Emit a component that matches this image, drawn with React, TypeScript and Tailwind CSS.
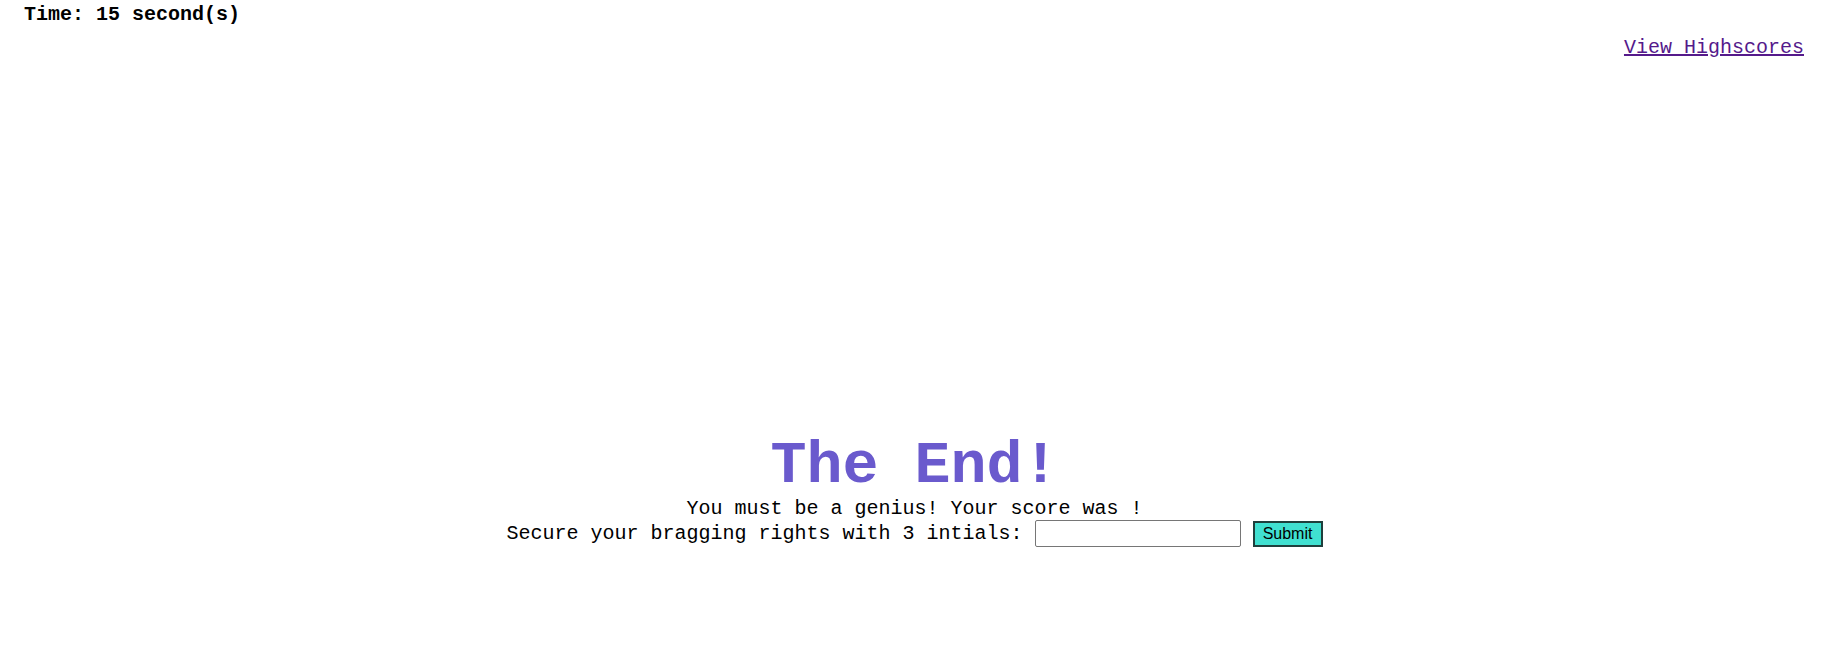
export default function App() {
  return (
    <div className="min-h-[667px] bg-white font-['Liberation_Mono','Courier_New',monospace] text-black">
      <header className="pl-[24px] pt-[3px] text-[20px] font-bold leading-[23px]">
        Time: 15 second(s)
      </header>
      <nav className="mt-[10px] flex justify-end pr-[31px] text-[20px] leading-[23px]">
        <a href="#" className="text-[#551A8B] underline">
          View Highscores
        </a>
      </nav>
      <main className="mt-[374px] flex flex-col items-center pr-[6px]">
        <h1 className="text-[60px] font-bold leading-[66px] text-[#6A5ACD]">
          The End!
        </h1>
        <p className="text-[20px] leading-[20px]">
          You must be a genius! Your score was !
        </p>
        <form className="mt-[1px] flex items-center text-[20px] leading-[23px]">
          <span className="whitespace-pre">Secure your bragging rights with 3 intials: </span>
          <input
            type="text"
            className="h-[27px] w-[206px] rounded-[2px] border border-[#767676] bg-white"
          />
          <button
            type="button"
            className="ml-[12px] h-[26px] w-[70px] border-2 border-[#1f3f3c] bg-[#40E0D0] font-['Liberation_Sans',Arial,sans-serif] text-[16px] leading-none"
          >
            Submit
          </button>
        </form>
      </main>
    </div>
  );
}
